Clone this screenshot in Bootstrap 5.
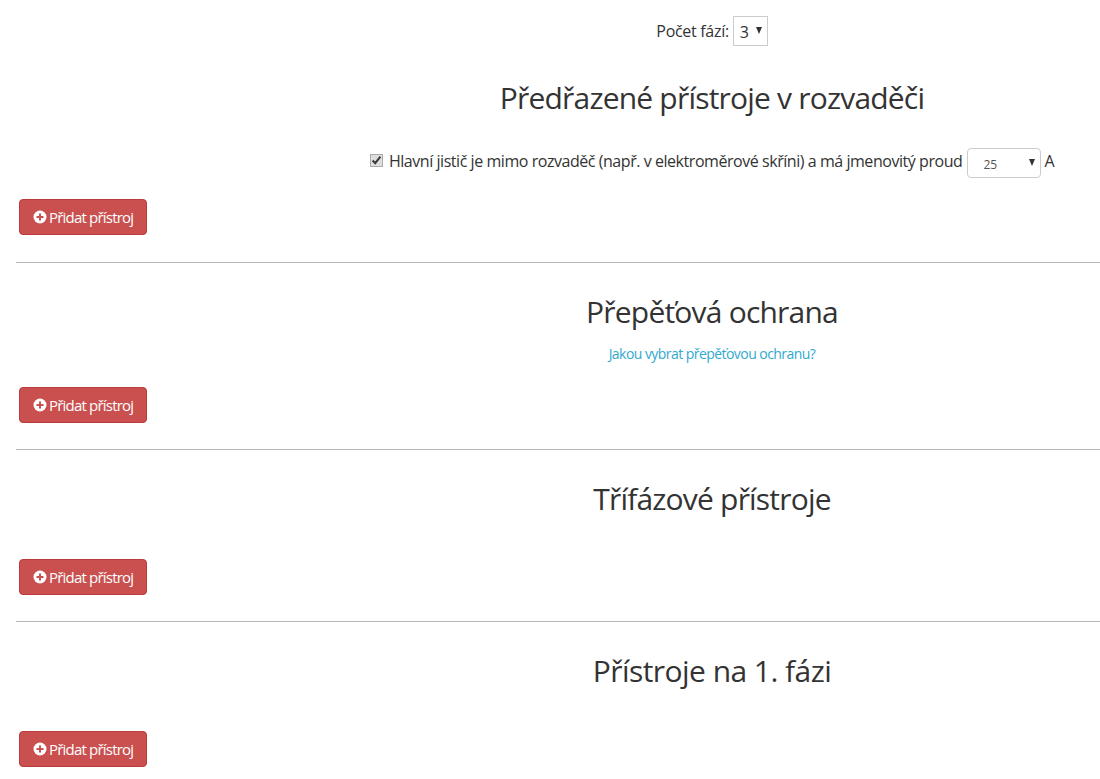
<!DOCTYPE html>
<html lang="cs">
<head>
<meta charset="UTF-8">
<title>Rozvaděč</title>
<link rel="stylesheet" href="https://cdn.jsdelivr.net/npm/bootstrap@5.3.3/dist/css/bootstrap.min.css">
<style>
body {
    font-family: "Open Sans", "Liberation Sans", sans-serif;
    font-size: 16px;
    color: #333;
    overflow-x: hidden;
}
.stranka { padding: 16px 0 0 16px; }
.stred { margin-left: 308px; text-align: center; }
.pocet-faz { height: 30px; line-height: 30px; letter-spacing: -0.3px; }
.vyber-faz {
    display: inline-block;
    width: 35px;
    height: 30px;
    padding: 0 0 0 6px;
    border: 1px solid #ccc;
    background: #fff;
    text-align: left;
    vertical-align: top;
    position: relative;
}
.vyber-proud {
    display: inline-block;
    width: 74px;
    height: 30px;
    line-height: 30px;
    border: 1px solid #ccc;
    border-radius: 4px;
    background: #fff;
    font-size: 12px;
    color: #555;
    padding-left: 15px;
    text-align: left;
    letter-spacing: 0;
    position: relative;
}
.sipka {
    position: absolute;
    right: 5px;
    top: 10px;
    width: 0;
    height: 0;
    border-left: 3.5px solid transparent;
    border-right: 3.5px solid transparent;
    border-top: 7px solid #333;
}
.nadpis {
    font-size: 30px;
    font-weight: 400;
    color: #333;
    letter-spacing: -0.8px;
    line-height: 40px;
    margin: 0;
}
.radek-jistic {
    display: flex;
    align-items: flex-start;
    justify-content: center;
    height: 30px;
    line-height: 26px;
    margin-top: 30px;
    letter-spacing: -0.45px;
    white-space: nowrap;
}
.radek-jistic input {
    margin: 6px 6px 0 0;
    width: 13px;
    height: 13px;
    accent-color: #dedede;
    outline: 1px solid #aaa;
    outline-offset: -1px;
    border-radius: 2px;
}
.radek-jistic .vyber-proud { margin: 0 3px 0 5px; line-height: 32px; }
.odkaz-pomoc { color: #31a9cd; font-size: 14px; letter-spacing: -0.55px; text-decoration: none; line-height: 20px; display: block; }
.btn-pridat {
    display: flex;
    align-items: center;
    gap: 2px;
    width: 128px;
    height: 36px;
    margin-left: 3px;
    padding: 0 0 0 13px;
    background: #c9504e;
    border: 1px solid #ba3c3a;
    border-radius: 4px;
    color: #fff;
    font-size: 15px;
    letter-spacing: -0.8px;
    white-space: nowrap;
}
.btn-pridat:hover { background: #c9504e; color: #fff; border-color: #ba3c3a; }
.cara { margin: 0; border: 0; border-top: 1px solid #b5b8b5; opacity: 1; }
.s1 { padding-top: 32px; }
.s2, .s3, .s4 { padding-top: 29px; }
.s1 .btn-pridat { margin-top: 21px; margin-bottom: 27px; }
.s2 .btn-pridat { margin-top: 23px; margin-bottom: 26px; }
.s3 .btn-pridat { margin-top: 40px; margin-bottom: 26px; }
.s4 .btn-pridat { margin-top: 40px; }
.s4 .nadpis { letter-spacing: -0.55px; }
.s2 .odkaz-pomoc { margin-top: 12px; }
</style>
</head>
<body>
<div class="stranka">
    <div class="stred pocet-faz">Počet fází: <span class="vyber-faz">3<span class="sipka"></span></span></div>

    <section class="s1">
        <div class="stred">
            <h2 class="nadpis">Předřazené přístroje v rozvaděči</h2>
            <div class="radek-jistic">
                <input type="checkbox" checked>
                Hlavní jistič je mimo rozvaděč (např. v elektroměrové skříni) a má jmenovitý proud
                <span class="vyber-proud">25<span class="sipka"></span></span>
                A
            </div>
        </div>
        <button class="btn btn-pridat" type="button">
            <svg width="14" height="14" viewBox="0 0 14 14"><circle cx="7" cy="7" r="6.5" fill="#fff"/><path d="M3.5 7h7M7 3.5v7" stroke="#c9504e" stroke-width="2"/></svg>
            Přidat přístroj
        </button>
    </section>
    <hr class="cara">

    <section class="s2">
        <div class="stred">
            <h2 class="nadpis">Přepěťová ochrana</h2>
            <a class="odkaz-pomoc" href="#">Jakou vybrat přepěťovou ochranu?</a>
        </div>
        <button class="btn btn-pridat" type="button">
            <svg width="14" height="14" viewBox="0 0 14 14"><circle cx="7" cy="7" r="6.5" fill="#fff"/><path d="M3.5 7h7M7 3.5v7" stroke="#c9504e" stroke-width="2"/></svg>
            Přidat přístroj
        </button>
    </section>
    <hr class="cara">

    <section class="s3">
        <div class="stred"><h2 class="nadpis">Třífázové přístroje</h2></div>
        <button class="btn btn-pridat" type="button">
            <svg width="14" height="14" viewBox="0 0 14 14"><circle cx="7" cy="7" r="6.5" fill="#fff"/><path d="M3.5 7h7M7 3.5v7" stroke="#c9504e" stroke-width="2"/></svg>
            Přidat přístroj
        </button>
    </section>
    <hr class="cara">

    <section class="s4">
        <div class="stred"><h2 class="nadpis">Přístroje na 1. fázi</h2></div>
        <button class="btn btn-pridat" type="button">
            <svg width="14" height="14" viewBox="0 0 14 14"><circle cx="7" cy="7" r="6.5" fill="#fff"/><path d="M3.5 7h7M7 3.5v7" stroke="#c9504e" stroke-width="2"/></svg>
            Přidat přístroj
        </button>
    </section>
</div>
<script src="https://cdn.jsdelivr.net/npm/bootstrap@5.3.3/dist/js/bootstrap.bundle.min.js"></script>
</body>
</html>
